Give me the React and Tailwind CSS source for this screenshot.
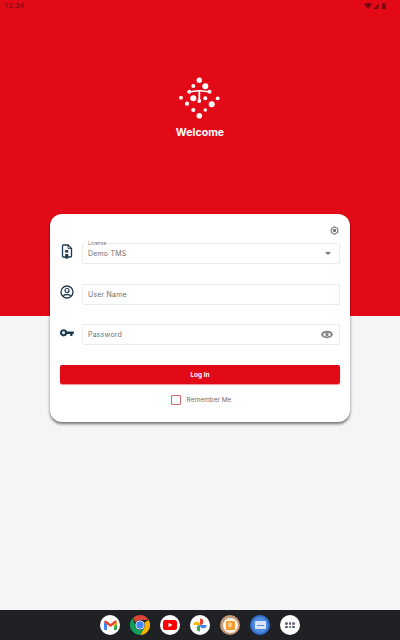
import React from 'react';

const NAVY = '#1d3b4f';

function Logo() {
  const dots = [
    [39.3, 10.3, 2.7], [33.3, 16, 2], [45.3, 16.2, 3],
    [21, 27.7, 1.9], [57.7, 28.3, 1.9],
    [33.3, 28.3, 3], [45.3, 28.3, 2],
    [27, 33.7, 2.1], [51.7, 34.3, 3],
    [33.3, 40, 2.1], [45.3, 40, 1.7], [39.3, 45.7, 2.8],
  ];
  return (
    <svg width="80" height="75" viewBox="0 0 80 75" fill="#fff">
      {dots.map(([x, y, r], i) => <circle key={i} cx={x} cy={y} r={r} />)}
      <path d="M29.5 21.7 C34 21.7 37 20.7 39.3 20.7 C41.6 20.7 45 21.7 49.5 21.7" stroke="#fff" strokeWidth="1.6" fill="none" />
      <path d="M39.3 20.5 V30" stroke="#fff" strokeWidth="1.8" />
      <circle cx="29.3" cy="21.7" r="2" />
      <circle cx="49.5" cy="21.7" r="2" />
      <circle cx="39.3" cy="31" r="1.9" />
    </svg>
  );
}

function StatusIcons() {
  return (
    <svg width="24" height="8" viewBox="0 0 24 8">
      <path d="M2 2.3 C4 0.6 8 0.6 10 2.3 L6 6.9 Z" fill="#7a0710" />
      <path d="M11 6.9 L16.5 1.4 V6.9 Z" fill="#7a0710" />
      <rect x="20" y="1.2" width="3.6" height="5.8" rx="0.5" fill="#7a0710" />
    </svg>
  );
}

function SimIcon() {
  return (
    <svg width="12" height="15" viewBox="0 0 12 15" fill="none">
      <path d="M2.5 1 H7 L10.5 4.5 V12 Q10.5 13 9.5 13 H2.5 Q1.5 13 1.5 12 V2 Q1.5 1 2.5 1 Z" stroke={NAVY} strokeWidth="1.3" />
      <path d="M7 1 V4.5 H10.5" stroke={NAVY} strokeWidth="0.8" />
      <rect x="4.2" y="6" width="3" height="2.6" fill={NAVY} />
      <rect x="4.2" y="10" width="3" height="4.6" fill={NAVY} />
    </svg>
  );
}

function UserIcon() {
  return (
    <svg width="14" height="14" viewBox="0 0 14 14" fill="none">
      <circle cx="7" cy="7" r="6" stroke={NAVY} strokeWidth="1.3" />
      <circle cx="7" cy="5.5" r="2" stroke={NAVY} strokeWidth="1.2" />
      <path d="M3.2 11 C4.5 9 9.5 9 10.8 11" stroke={NAVY} strokeWidth="1.3" />
    </svg>
  );
}

function KeyIcon() {
  return (
    <svg width="15" height="8" viewBox="0 0 15 8" fill="none">
      <circle cx="3.8" cy="3.8" r="2.7" stroke={NAVY} strokeWidth="2.3" />
      <path d="M6 2.4 H14.8 V5 H13.3 V7.2 H11 V5 H6 Z" fill={NAVY} />
    </svg>
  );
}

function GearIcon() {
  return (
    <svg width="9" height="9" viewBox="0 0 24 24" fill="none" stroke="#757575" strokeWidth="3">
      <path d="M12 2 L20.5 7 V17 L12 22 L3.5 17 V7 Z" strokeLinejoin="round" />
      <circle cx="12" cy="12" r="3" fill="#757575" />
    </svg>
  );
}

function EyeIcon() {
  return (
    <svg width="12" height="9" viewBox="0 0 12 9" fill="none">
      <path d="M0.9 4.5 C2.5 0.8 9.5 0.8 11.1 4.5 C9.5 8.2 2.5 8.2 0.9 4.5 Z" stroke="#858585" strokeWidth="1.8" />
      <circle cx="6" cy="4.5" r="1.7" fill="#858585" />
    </svg>
  );
}

function Field({ icon, label, value, placeholder, right }) {
  return (
    <div className="flex items-center h-[21px]">
      <div className="w-[14px] mb-[4px] flex justify-center shrink-0">{icon}</div>
      <div className="relative ml-[8px] flex-1 h-full flex items-center justify-between pl-[5px] pr-[6px] border border-[#ececec] rounded-[2px]">
        {label && (
          <span className="absolute -top-[3px] left-[3px] bg-white px-[2px] text-[5px] leading-[5px] text-[#777]">{label}</span>
        )}
        <span className="text-[7px] leading-none tracking-[0.2px] text-[#707070]">{value || placeholder}</span>
        {right}
      </div>
    </div>
  );
}

function DockCircle({ bg = 'bg-white', children }) {
  return (
    <div className={`w-5 h-5 rounded-full flex items-center justify-center overflow-hidden ${bg}`}>
      {children}
    </div>
  );
}

function Dock() {
  return (
    <div className="h-[30px] bg-[#202124] flex items-center justify-center gap-[10px] shrink-0">
      <DockCircle>
        <svg width="13" height="10" viewBox="0 0 13 10">
          <path d="M0 2 V9 Q0 10 1 10 H3 V4 Z" fill="#4285f4" />
          <path d="M13 2 V9 Q13 10 12 10 H10 V4 Z" fill="#34a853" />
          <path d="M0 2 Q0 0 2 0.5 L6.5 4 L11 0.5 Q13 0 13 2 L10 4.5 L6.5 7 L3 4.5 Z" fill="#ea4335" />
          <path d="M10 4.5 L13 2 V4 L10 6.5 Z" fill="#fbbc04" />
        </svg>
      </DockCircle>
      <svg width="20" height="20" viewBox="0 0 20 20">
        <path d="M10 0 A10 10 0 0 1 18.7 5 H10 A5 5 0 0 0 5.7 7.5 L2.9 3 A10 10 0 0 1 10 0 Z" fill="#db4437" />
        <path d="M18.7 5 A10 10 0 0 1 10 20 L14.3 12.5 A5 5 0 0 0 14.3 7.5 Z" fill="#f4b400" />
        <path d="M2.9 3 A10 10 0 0 0 10 20 L14.3 12.5 A5 5 0 0 1 5.7 12.5 Z" fill="#0f9d58" />
        <circle cx="10" cy="10" r="4.6" fill="#fff" />
        <circle cx="10" cy="10" r="3.7" fill="#4285f4" />
      </svg>
      <DockCircle>
        <svg width="14" height="10" viewBox="0 0 14 10">
          <rect width="14" height="10" rx="2.5" fill="#f00" />
          <path d="M5.5 2.8 L9.5 5 L5.5 7.2 Z" fill="#fff" />
        </svg>
      </DockCircle>
      <DockCircle>
        <svg width="14" height="14" viewBox="0 0 14 14">
          <path d="M7 7 H0.4 A3.3 3.3 0 0 1 7 7 Z" fill="#fbbc04" />
          <path d="M7 7 V0.4 A3.3 3.3 0 0 1 7 7 Z" fill="#ea4335" />
          <path d="M7 7 H13.6 A3.3 3.3 0 0 1 7 7 Z" fill="#4285f4" />
          <path d="M7 7 V13.6 A3.3 3.3 0 0 1 7 7 Z" fill="#34a853" />
        </svg>
      </DockCircle>
      <DockCircle bg="bg-[#c49a7c]">
        <div className="w-[15px] h-[15px] rounded-full bg-[#fdf3e6] flex items-center justify-center">
          <div className="w-[9px] h-[9px] rounded-[1px] bg-[#f29d38] flex items-center justify-center">
            <div className="w-[4px] h-[4px] bg-[#f9c98a]" />
          </div>
        </div>
      </DockCircle>
      <DockCircle bg="bg-[#2f6fc9]">
        <div className="w-[16px] h-[16px] rounded-full bg-[#4f8ade] flex items-center justify-center">
          <div className="w-[11px] h-[8px] rounded-[1px] bg-[#d6e4f8] flex items-center justify-center">
            <div className="w-[7px] h-[1px] bg-[#4f8ade]" />
          </div>
        </div>
      </DockCircle>
      <DockCircle>
        <div className="grid grid-cols-3 gap-[1px]">
          {['#5f6368', '#5f6368', '#7a5c8a', '#44507a', '#44507a', '#44507a'].map((c, i) => (
            <div key={i} className="w-[2.5px] h-[2.5px] rounded-full" style={{ background: c }} />
          ))}
        </div>
      </DockCircle>
    </div>
  );
}

export default function App() {
  return (
    <div className="h-[640px] w-[400px] flex flex-col overflow-hidden bg-[#f5f5f5] font-['Inter','Liberation_Sans',sans-serif]">
      <div className="h-[316px] shrink-0 bg-[#e30a17] flex flex-col">
        <div className="h-[12px] pl-[4px] pr-[14px] flex items-center justify-between">
          <span className="text-[8px] leading-none text-[#7a0710] font-['Roboto',sans-serif]">12:34</span>
          <StatusIcons />
        </div>
        <div className="mt-[58px] flex justify-center"><Logo /></div>
        <div className="-mt-[19px] text-center text-[10.6px] leading-[14px] font-bold text-white">Welcome</div>
      </div>

      <div className="flex-1 min-h-0">
        <div className="relative mx-[50px] -mt-[102px] h-[208px] bg-white rounded-[12px] shadow-[0_2px_3px_rgba(0,0,0,0.55)] px-[10px] flex flex-col">
          <div className="flex justify-end pt-[12px] h-[29px] pr-[1px]"><GearIcon /></div>
          <div className="flex flex-col gap-[19.5px]">
            <Field
              icon={<SimIcon />}
              label="License"
              value="Demo TMS"
              right={<div className="mr-[2px] w-0 h-0 border-x-[3px] border-x-transparent border-t-[3px] border-t-[#777]" />}
            />
            <Field icon={<UserIcon />} placeholder="User Name" />
            <Field icon={<KeyIcon />} placeholder="Password" right={<EyeIcon />} />
          </div>
          <button className="mt-[20px] h-[19px] pt-[2px] bg-[#e30a17] rounded-[2px] text-white text-[6.5px] font-bold shadow-[0_1px_1px_rgba(227,10,23,0.45)]">
            Log In
          </button>
          <div className="mt-[11px] pl-[2px] flex items-center justify-center gap-[6px]">
            <div className="w-[10px] h-[10px] border border-[#d2666e] rounded-[1px]" />
            <span className="text-[6.5px] leading-none text-[#707070]">Remember Me</span>
          </div>
        </div>
      </div>

      <Dock />
    </div>
  );
}
